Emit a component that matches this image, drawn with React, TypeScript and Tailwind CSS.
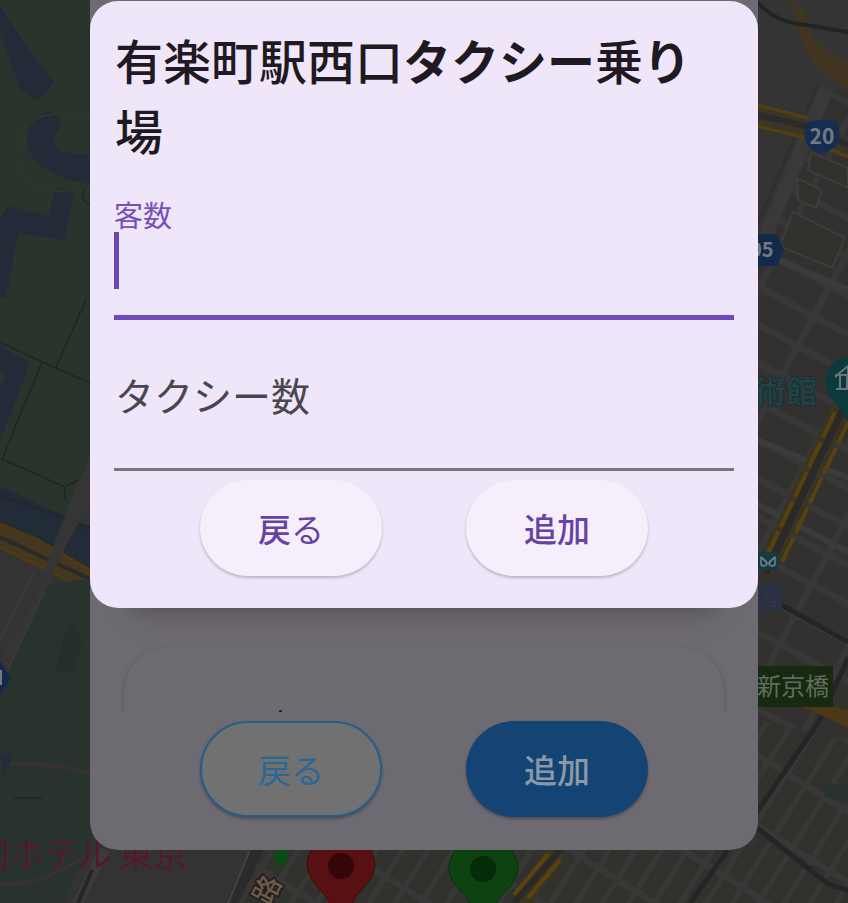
import type { ReactNode } from "react";

const mapFont = '"Noto Sans CJK JP", sans-serif';

function Block({ d }: { d: string }) {
  return <path d={d} fill="#32312d" stroke="#3d3d3d" strokeWidth="2" />;
}

function CityMap() {
  return (
    <svg
      className="absolute inset-0 h-full w-full"
      viewBox="0 0 848 903"
      preserveAspectRatio="xMidYMin slice"
      fontFamily={mapFont}
      aria-label="地図"
    >
      <defs>
        <pattern id="blocks" width="62" height="34" patternUnits="userSpaceOnUse" patternTransform="rotate(28)">
          <rect width="62" height="34" fill="#373737" />
          <rect x="3" y="3" width="54" height="26" rx="1" fill="#32312f" stroke="#2f2f2d" />
        </pattern>
        <pattern id="lots" width="22" height="60" patternUnits="userSpaceOnUse" patternTransform="rotate(32)">
          <rect width="22" height="60" fill="#373736" />
          <rect x="3" y="3" width="15" height="52" fill="#31312e" stroke="#2d2d2b" />
        </pattern>
      </defs>
      <rect width="848" height="903" fill="#343333" />

      {/* palace gardens */}
      <path d="M0 0H100V460L50 560L0 520Z" fill="#2a332c" />
      <path d="M0 6L38 62L54 82L38 100L22 92L0 34Z" fill="#242a38" />
      <path d="M50 112Q62 118 59 128Q49 146 62 152L100 156V186Q60 180 38 164Q24 148 28 132Q36 112 50 112Z" fill="#242a38" />
      <path d="M56 188L74 192L64 240L18 233L6 298H0V218L8 206L48 216Z" fill="#242a38" />
      <path d="M0 346L28 362L26 374L0 440V386L6 378L0 372Z" fill="#242a38" />
      <path d="M100 120Q20 100 16 150T100 190" fill="none" stroke="#2d382b" strokeWidth="2" />
      <path d="M0 342L42 362L92 384M86 300L56 367M42 362L2 459L65 487L78 480M65 487V500M84 190Q80 204 92 204" fill="none" stroke="#1e2822" strokeWidth="1.5" />

      {/* moat and boulevard */}
      <path d="M0 486L92 528V570L0 530Z" fill="#222b38" />
      <path d="M0 495L92 529" stroke="#25262a" strokeWidth="3" />
      <path d="M0 525L36 540L92 572V590L0 546Z" fill="#43371f" />
      <path d="M0 524L36 539L92 571M0 547L92 592" fill="none" stroke="#51390f" strokeWidth="3" />
      <path d="M0 537L92 580" stroke="#2b2a29" strokeWidth="4" />
      <path d="M0 552L40 568L20 620L0 650Z" fill="#343333" />
      <path d="M92 455L74 490L34 600L0 660V690L44 600L58 560L92 500Z" fill="#363535" />
      <path d="M92 578V903H0V686L48 584Z" fill="#29332e" />
      <path d="M44 592L0 686M34 572L0 640" stroke="#3b3a39" strokeWidth="2" />
      <path d="M70 620L82 640L74 672L54 672Z" fill="#252e29" />
      <path d="M0 763Q44 762 92 773M0 884Q46 886 92 851" fill="none" stroke="#373131" strokeWidth="4" />
      <path d="M14 798H42" stroke="#1d2721" strokeWidth="1.5" />
      <path d="M0 756L16 750L4 776Z" fill="#262b3a" />
      <path d="M90 845L64 903H250V845Z" fill="#343333" />
      <path d="M104 850L78 903" stroke="#3c3b3a" strokeWidth="10" />
      <path d="M92 870L78 903" stroke="#252525" strokeWidth="4" />
      <path d="M0 661L11 678L0 695Z" fill="#12294a" />
      <path d="M1 670V685" stroke="#77777c" strokeWidth="2" />

      {/* blocks to the east */}
      <path d="M750 0H848V903H750Z" fill="#343434" />
      <path d="M820 90H848V903H757V270Z" fill="url(#blocks)" />
      <path d="M757 720L848 740V903H757Z" fill="url(#lots)" />
      <path d="M250 845H757V903H230Z" fill="url(#lots)" />
      <path d="M826 90L760 250" stroke="#393939" strokeWidth="14" />
      <path d="M818 84L757 226" stroke="#2e2e2f" strokeWidth="2" />
      <path d="M789 0Q808 10 808 24Q816 50 848 62V88Q818 76 804 48Q798 22 789 0Z" fill="#413420" />
      <path d="M757 2Q776 22 800 24L848 32" fill="none" stroke="#222324" strokeWidth="4" />
      <path d="M757 105L804 118L848 140V157L800 137L757 126Z" fill="#3b3528" />
      <path d="M757 105L808 118M757 126L802 137L848 157" fill="none" stroke="#54400f" strokeWidth="3" />
      <path d="M757 115L802 125L848 145" fill="none" stroke="#2b2b2c" strokeWidth="6" />
      <Block d="M811 152L848 168V188L808 170Z" />
      <Block d="M797 178L822 190L816 208L798 200Z" />
      <Block d="M793 212L845 238L832 268L780 246Z" />
      <path d="M757 250L848 290M757 440L848 478M757 504L848 552" stroke="#3b3b3b" strokeWidth="6" />

      <path d="M842 405L763 573" stroke="#3c3423" strokeWidth="18" />
      <path d="M835 412L765 560M850 418L782 562" stroke="#57420e" strokeWidth="4" strokeDasharray="28 5" />
      <path d="M845 405L766 573" stroke="#2b2928" strokeWidth="7" />

      <path d="M780 604L848 642M848 658L820 720L757 812M757 828L828 884L848 890M728 850L690 903" fill="none" stroke="#252525" strokeWidth="5" />
      <path d="M800 707H836L848 710V728Q826 716 800 707Z" fill="#4a3816" />
      <path d="M828 782L848 788V804L824 796Z" fill="#29332f" />

      {/* route shields */}
      <path d="M808 122Q822 118 837 122Q843 138 835 147Q828 152 822 154Q814 152 808 146Q801 138 808 122Z" fill="#162c50" />
      <text x="822" y="144" textAnchor="middle" fontSize="21" fontWeight="700" fill="#737981">20</text>
      <path d="M745 234H777L784 250L777 266H745Z" fill="#142a4b" />
      <text x="750" y="257" fontSize="20" fontWeight="700" fill="#737981">05</text>

      {/* place names */}
      <text x="755" y="403" fontSize="31" fontWeight="500" fill="#1b4546" stroke="#262c2c" strokeWidth="2" paintOrder="stroke">術館</text>
      <path d="M848 356Q826 360 826 382Q826 396 840 408L848 422Z" fill="#0d3a3c" />
      <path d="M836 376L848 366V375H836ZM840 375V389M847 375V389M836 389H848" fill="none" stroke="#697779" strokeWidth="2" />
      <rect x="758" y="552" width="20" height="18" rx="3" fill="#143b43" />
      <path d="M761 557V565Q768 568 766 561L761 557L768 564L775 557L770 561Q768 568 775 565V557" fill="none" stroke="#748388" strokeWidth="1.5" strokeLinejoin="round" />
      <text x="755" y="609" fontSize="29" fontWeight="500" fill="#25314f">橋</text>
      <rect x="750" y="666" width="83" height="41" fill="#172910" />
      <text x="757" y="695" fontSize="24" fill="#626b60">新京橋</text>
      <text x="-24" y="867" fontSize="34" fill="#541a2b">国ホテル 東京</text>

      {/* southern strip with pins */}
      <path d="M258 848L232 903" stroke="#2b2b2b" strokeWidth="12" />
      <path d="M250 850L228 903" stroke="#424241" strokeWidth="2" />
      <path d="M558 850L520 903" stroke="#3c3423" strokeWidth="20" />
      <path d="M548 854L514 895M560 860L528 898" stroke="#5b430c" strokeWidth="4" />
      <path d="M560 850L514 903" stroke="#2b2928" strokeWidth="6" />
      <path d="M273 846H289L288 860L282 868L275 861Z" fill="#0e4a13" />
      <text x="253" y="900" fontSize="28" fontWeight="500" fill="#6a5a48" stroke="#231b1a" strokeWidth="3" paintOrder="stroke" transform="rotate(-62 267 890)">路</text>
      <path d="M341 832A34 34 0 0 1 375 866Q374 878 358 894Q351 903 348 914H334Q331 903 324 894Q308 878 307 866A34 34 0 0 1 341 832Z" fill="#591012" stroke="#3d0b0d" />
      <circle cx="341" cy="866" r="13" fill="#340607" />
      <path d="M483 836A34 34 0 0 1 518 870Q517 882 501 896Q494 904 491 918H476Q472 904 466 896Q450 882 449 870A34 34 0 0 1 483 836Z" fill="#0d4211" stroke="#08300a" />
      <circle cx="483" cy="869" r="13" fill="#052b07" />
    </svg>
  );
}

function ActionRow({ children }: { children: ReactNode }) {
  return <div className="flex justify-around px-[68px]">{children}</div>;
}

function ActionButton({ className, children }: { className: string; children: ReactNode }) {
  return (
    <button type="button" className={`h-24 w-[182px] rounded-full text-[33px] leading-none ${className}`}>
      {children}
    </button>
  );
}

export default function App() {
  return (
    <div
      lang="ja"
      className="relative grid min-h-screen grid-cols-1 items-start overflow-hidden bg-[#343333] px-[90px] font-['Noto_Sans_CJK_JP',sans-serif]"
    >
      <CityMap />

      <section className="relative col-start-1 row-start-1 overflow-hidden rounded-b-[28px] bg-[#6e6a71] pt-[646px] pb-[33px]">
        <div className="h-[66px] overflow-hidden px-[34px] pt-px">
          <div className="h-40 rounded-[44px] bg-[#6e6a71] pt-[63px] shadow-[0_1px_4px_#5a565e]">
            <div className="ml-[155px] size-[3px] rounded-full bg-[#1c1a20]" />
          </div>
        </div>
        <div className="pt-[9px]">
          <ActionRow>
            <ActionButton className="border-2 border-[#245e8b] bg-[#717171] text-[#2b6796] shadow-[0_2px_3px_#4d4c57]">
              戻る
            </ActionButton>
            <ActionButton className="bg-[#134474] font-medium text-[#8b98a8] shadow-[0_2px_3px_#4d4c57]">
              追加
            </ActionButton>
          </ActionRow>
        </div>
      </section>

      <form
        role="dialog"
        aria-labelledby="stand-name"
        className="relative col-start-1 row-start-1 mt-px rounded-[28px] bg-[#efe6f9] pb-8 shadow-[0_44px_24px_-44px_#4a4651]"
      >
        <div className="px-6 pt-[23px]">
          <h1 id="stand-name" className="pl-px text-5xl leading-[70px] font-medium text-[#1f1a22]">
            有楽町駅西口<span className="font-bold">タクシー</span>乗<span className="font-bold">り</span>場
          </h1>

          <div className="mt-8 flex h-[124px] flex-col border-b-[5px] border-[#7149b8]">
            <label htmlFor="guests" className="text-[29px] leading-9 text-[#7650b8]">
              客数
            </label>
            <div className="flex items-center">
              <span className="h-[57px] w-[5px] bg-[#6d47ad]" />
              <input id="guests" inputMode="numeric" className="h-14 min-w-0 flex-1 bg-transparent pl-1 text-[39px] outline-none" />
            </div>
          </div>

          <div className="flex h-[151px] items-center border-b-[3px] border-[#7b7384]">
            <label htmlFor="taxis" className="pl-px text-[39px] leading-[56px] text-[#4a4550]">
              タクシー数
            </label>
            <input id="taxis" inputMode="numeric" className="h-14 min-w-0 flex-1 bg-transparent pl-4 text-[39px] outline-none" />
          </div>
        </div>

        <div className="pt-[9px]">
          <ActionRow>
            <ActionButton className="bg-[#f6effb] font-medium text-[#6543a5] shadow-[0_2px_3px_#bdb4c8]">
              戻<span className="font-normal">る</span>
            </ActionButton>
            <ActionButton className="bg-[#f6effb] font-medium text-[#6543a5] shadow-[0_2px_3px_#bdb4c8]">追加</ActionButton>
          </ActionRow>
        </div>
      </form>
    </div>
  );
}
